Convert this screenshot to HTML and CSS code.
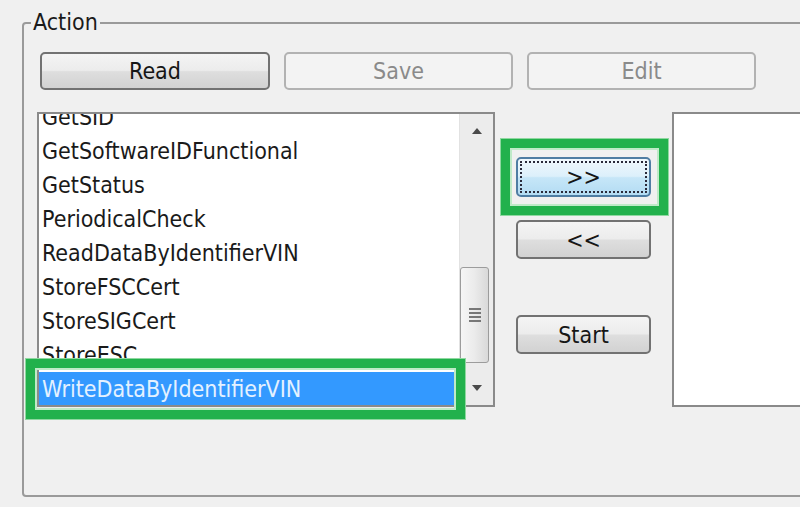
FILE: index.html
```html
<!DOCTYPE html>
<html>
<head>
<meta charset="utf-8">
<link rel="stylesheet" href="styles.css">
</head>
<body>
<div class="group">
  <div class="legend">Action</div>
  <div class="toolbar">
    <button class="btn btn-read">Read</button>
    <button class="btn btn-wide" disabled>Save</button>
    <button class="btn btn-wide" disabled>Edit</button>
  </div>
  <div class="main">
    <div class="list">
      <div class="items">
        <div class="rows">
          <div class="row">GetSID</div>
          <div class="row">GetSoftwareIDFunctional</div>
          <div class="row">GetStatus</div>
          <div class="row">PeriodicalCheck</div>
          <div class="row">ReadDataByIdentifierVIN</div>
          <div class="row">StoreFSCCert</div>
          <div class="row">StoreSIGCert</div>
          <div class="row">StoreESC</div>
          <div class="row selected">WriteDataByIdentifierVIN</div>
        </div>
      </div>
      <div class="scroll">
        <div class="arrow-btn">
          <svg width="10" height="6" viewBox="0 0 10 6"><polygon points="0,6 10,6 5,0" fill="#4a4a4a"/></svg>
        </div>
        <div class="track">
          <div class="thumb">
            <svg width="12" height="16" viewBox="0 0 12 16"><g stroke="#5a5a5a" stroke-width="1.6"><line x1="0" y1="2" x2="12" y2="2"/><line x1="0" y1="6" x2="12" y2="6"/><line x1="0" y1="10" x2="12" y2="10"/><line x1="0" y1="14" x2="12" y2="14"/></g></svg>
          </div>
        </div>
        <div class="arrow-btn">
          <svg width="10" height="6" viewBox="0 0 10 6"><polygon points="0,0 10,0 5,6" fill="#4a4a4a"/></svg>
        </div>
      </div>
      <div class="mark mark-row"></div>
    </div>
    <div class="middle">
      <div class="focus-wrap">
        <button class="btn btn-mid btn-focus">&gt;&gt;</button>
      </div>
      <button class="btn btn-mid btn-back">&lt;&lt;</button>
      <button class="btn btn-mid btn-start">Start</button>
    </div>
    <div class="list-right"></div>
  </div>
</div>
</body>
</html>
```
FILE: styles.css
```css
* { box-sizing: border-box; }
html, body {
  margin: 0;
  width: 800px;
  height: 507px;
  overflow: hidden;
  background: #f0f0f0;
}
body {
  font-family: "DejaVu Sans Condensed", "DejaVu Sans", sans-serif;
  font-size: 23px;
  color: #1a1a1a;
}
.group {
  margin: 22px 0 0 22px;
  width: 860px;
  height: 475px;
  border: 2px solid #9a9a9a;
  border-radius: 4px;
  padding: 0 0 0 13px;
}
.legend {
  width: fit-content;
  height: 26px;
  line-height: 26px;
  margin-top: -15px;
  margin-left: -6px;
  padding: 0 2px;
  background: #f0f0f0;
}
.toolbar {
  display: flex;
  gap: 14px;
  margin: 17px 0 0 3px;
}
.btn {
  flex-shrink: 0;
  font-family: inherit;
  font-size: 23px;
  color: #161616;
  height: 38px;
  padding: 0;
  border: 2px solid #727272;
  border-radius: 5px;
  background: linear-gradient(to bottom, #f4f4f4 0%, #ececec 48%, #dedede 52%, #d2d2d2 100%);
}
.btn-read { width: 230px; }
.btn-wide { width: 229px; }
.btn:disabled {
  border-color: #b2b2b2;
  background: #f3f3f3;
  color: #8a8a8a;
}
.main {
  display: flex;
  margin-top: 22px;
}
.list {
  flex-shrink: 0;
  position: relative;
  display: flex;
  width: 458px;
  height: 295px;
  border: 2px solid #8a8a8a;
  background: #fff;
}
.items {
  flex: 1;
  overflow: hidden;
}
.rows { margin-top: -14px; }
.row {
  height: 34px;
  line-height: 34px;
  padding-left: 3px;
  white-space: nowrap;
}
.row.selected {
  background: #3399ff;
  color: #e4f1ff;
}
.scroll {
  flex-shrink: 0;
  width: 34px;
  display: flex;
  flex-direction: column;
  background: #ececec;
  border-left: 1px solid #e2e2e2;
}
.arrow-btn {
  height: 34px;
  display: flex;
  align-items: center;
  justify-content: center;
}
.track {
  flex: 1;
  padding: 119px 4px 0 0;
}
.thumb {
  height: 96px;
  border: 1px solid #9c9c9c;
  border-radius: 3px;
  background: linear-gradient(to right, #f6f6f6 0%, #ebebeb 50%, #d9d9d9 100%);
  display: flex;
  align-items: center;
  justify-content: center;
}
.mark {
  position: absolute;
  border: 9px solid #22b14c;
  box-shadow: inset 0 0 0 2px #bfeac8, 0 0 0 1px #8fd8a0;
}
.mark-row {
  left: -13px;
  top: 245px;
  width: 439px;
  height: 60px;
}
.middle {
  flex-shrink: 0;
  width: 135px;
  margin-left: 21px;
  display: flex;
  flex-direction: column;
}
.btn-mid { width: 135px; }
.focus-wrap {
  position: relative;
  margin-top: 45px;
}
.focus-wrap::after {
  content: "";
  position: absolute;
  top: -18px;
  left: -15px;
  right: -17px;
  bottom: -18px;
  border: 9px solid #22b14c;
  box-shadow: inset 0 0 0 2px #bfeac8, 0 0 0 1px #8fd8a0;
}
.btn-focus {
  display: block;
  height: 40px;
  border-color: #4f7da3;
  background: linear-gradient(to bottom, #f0f8fd 0%, #dcf0fb 48%, #c6e6f8 52%, #b3dcf3 100%);
  outline: 2px dotted #2a2a3a;
  outline-offset: -6px;
}
.btn-back {
  height: 39px;
  margin-top: 23px;
}
.btn-start {
  height: 39px;
  margin-top: 56px;
}
.list-right {
  flex-shrink: 0;
  width: 200px;
  height: 295px;
  margin-left: 21px;
  border: 2px solid #8a8a8a;
  background: #fff;
}
```
